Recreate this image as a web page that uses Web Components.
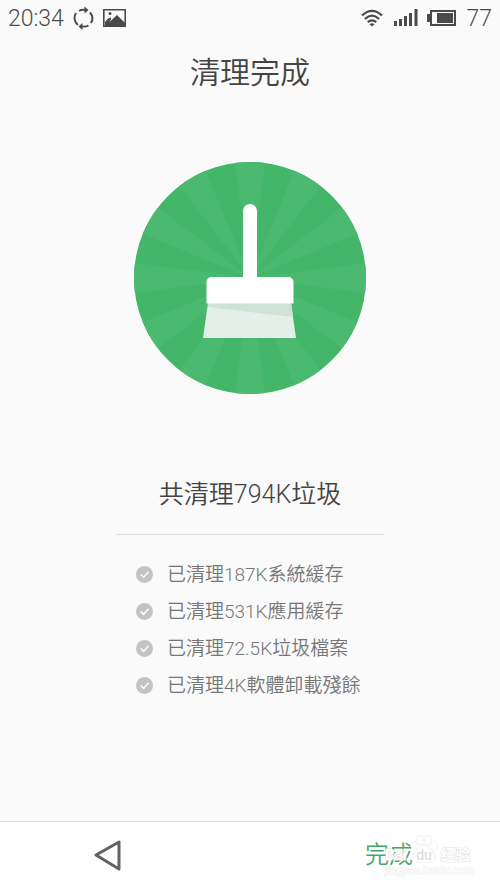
<!DOCTYPE html>
<html lang="zh-Hant">
<head>
<meta charset="utf-8">
<meta name="viewport" content="width=device-width, initial-scale=1">
<title>清理完成</title>
<style>
  html, body { margin: 0; height: 100%; }
  body {
    background: #fafafa;
    color: #444;
    font-family: Roboto, "Noto Sans CJK TC", sans-serif;
    font-weight: 350;
  }
</style>
</head>
<body>
<cleaner-screen>
  <status-bar slot="status" time="20:34" level="77"></status-bar>
  <span slot="title">清理完成</span>
  <broom-badge slot="art"></broom-badge>
  <span slot="summary">共清理794K垃圾</span>
  <check-item slot="items">已清理187K系統緩存</check-item>
  <check-item slot="items">已清理531K應用緩存</check-item>
  <check-item slot="items">已清理72.5K垃圾檔案</check-item>
  <check-item slot="items">已清理4K軟體卸載殘餘</check-item>
  <bottom-bar slot="footer">完成</bottom-bar>
</cleaner-screen>

<script>
class BaseElement extends HTMLElement {
  connectedCallback() {
    if (this.shadowRoot) return;
    this.attachShadow({ mode: "open" }).innerHTML = this.template();
  }
}

customElements.define("cleaner-screen", class extends BaseElement {
  template() {
    return `
    <style>
      :host { display: flex; flex-direction: column; min-height: 100vh; }
      main { flex: 1; display: flex; flex-direction: column; align-items: center; }
      h1 { margin: 15px 0 0; font-size: 30px; line-height: 44px; font-weight: inherit; }
      .art { margin-top: 67px; }
      h2 { margin: 83px 0 0; font-size: 25px; line-height: 36px; font-weight: inherit; }
      .list {
        margin-top: 21px; padding: 21px 20px 40px; box-sizing: border-box;
        width: 268px; border-top: 1px solid #dedede;
      }
    </style>
    <slot name="status"></slot>
    <main>
      <h1><slot name="title"></slot></h1>
      <div class="art"><slot name="art"></slot></div>
      <h2><slot name="summary"></slot></h2>
      <div class="list" role="list"><slot name="items"></slot></div>
    </main>
    <slot name="footer"></slot>`;
  }
});

customElements.define("status-bar", class extends BaseElement {
  template() {
    return `
    <style>
      :host { display: flex; justify-content: space-between; align-items: center;
              height: 36px; padding: 0 8px; font-size: 23px; font-weight: 300; color: #4a4a4a; }
      div { display: flex; align-items: center; gap: 9px; }
      svg { display: block; }
    </style>
    <div>
      <span>${this.getAttribute("time")}</span>
      <svg width="21" height="24" viewBox="0 0 21 24" fill="none" stroke="currentColor" stroke-width="2">
        <path d="M5 19A9 9 0 0 1 3 7M6 5A9 9 0 0 1 12 4M17 6.500A9 9 0 0 1 18 17M15.500 19.500Q13 21 9 20.500"/>
        <path d="M11.500 .5l4 3.500-4 3.500zM9.500 17l-4 3.500 4 3.500z" fill="currentColor" stroke="none"/>
      </svg>
      <svg width="23" height="18" viewBox="0 0 23 18">
        <path fill="none" stroke="currentColor" stroke-width="1.600" d="M.8.8h21.400v16.400H.8z"/>
        <circle cx="7" cy="4.500" r="1.500" fill="currentColor"/>
        <path fill="currentColor" d="M2 13l3-3.500 3-1v2l-2 3 8-7.500 8 8V17H2z"/>
      </svg>
    </div>
    <div>
      <svg width="22" height="18" viewBox="0 0 23 18" fill="none" stroke="currentColor" stroke-width="2.200">
        <path d="M1 6.500Q11.500-3.500 22 6.500M4 10Q11.500 3 19 10M7 13.300Q11.500 9.500 16 13.300"/>
        <path d="M8.800 15.500Q11.500 13.500 14.200 15.500L11.500 18z" fill="currentColor" stroke="none"/>
      </svg>
      <svg width="26" height="18" viewBox="0 0 26 18" fill="currentColor">
        <path d="M2 12h3v5H2zM7 10h3v7H7zM12 7h3v10h-3zM17 4h3v13h-3zM22.500 0h3v17h-3z"/>
      </svg>
      <svg width="30" height="16" viewBox="0 0 30 16">
        <path fill="none" stroke="currentColor" stroke-width="2" d="M4 1h24v14H4z"/>
        <path fill="currentColor" d="M0 4h4v8H0zM10 3h16v10H10z"/>
      </svg>
      <span>${this.getAttribute("level")}</span>
    </div>`;
  }
});

customElements.define("broom-badge", class extends BaseElement {
  template() {
    return `
    <style>:host, svg { display: block; }</style>
    <svg width="232" height="232" viewBox="0 0 232 232" role="img" aria-label="清理">
      <circle cx="116" cy="116" r="116" fill="#44b66a"/>
      <circle cx="116" cy="116" r="58" fill="none" stroke="#4cb971" stroke-width="116"
        pathLength="24" stroke-dasharray="1 1" stroke-dashoffset=".5"/>
      <path fill="#e5efe9" d="M74 141h83l5 35H69z"/>
      <path fill="#d0e1d6" d="M74 141h83l2 14-85-10z"/>
      <path fill="#fff" d="M72.500 120a5 5 0 0 1 5-5H109V49a7 7 0 0 1 14 0v66h31.500a5 5 0 0 1 5 5v21.500h-87z"/>
    </svg>`;
  }
});

customElements.define("check-item", class extends BaseElement {
  connectedCallback() { super.connectedCallback(); this.setAttribute("role", "listitem"); }
  template() {
    return `
    <style>
      :host { display: flex; align-items: center; gap: 14px; height: 37px;
              font-size: 19px; line-height: 28px; color: #767676; white-space: nowrap; }
      svg { flex: none; }
    </style>
    <svg width="17" height="17" viewBox="0 0 17 17">
      <circle cx="8.500" cy="8.500" r="8.500" fill="#c3c3c3"/>
      <path d="M4.800 8.500l2.800 2.800 5-5.500" fill="none" stroke="#fafafa" stroke-width="1.600"/>
    </svg>
    <span><slot></slot></span>`;
  }
});

customElements.define("bottom-bar", class extends BaseElement {
  template() {
    return `
    <style>
      :host { display: grid; grid-template-columns: 216px 1fr 222px; align-items: center;
              height: 66px; background: #fff; border-top: 1px solid #dedede; }
      button { border: 0; background: none; padding: 0; margin: 0; font: inherit; color: inherit; justify-self: center; }
      .done { grid-column: 3; font-size: 24px; line-height: 36px; color: #42a868; position: relative; }
      svg { display: block; }
      .mark { position: absolute; left: 20px; top: -2px; font: 700 15px/18px Roboto, "Noto Sans CJK SC", sans-serif;
              color: #fff; -webkit-text-stroke: 1px #e2e2e2; paint-order: stroke; pointer-events: none; white-space: nowrap; }
      .row { display: flex; align-items: flex-end; gap: 3px; height: 29px; }
      .url { display: block; font-size: 11px; line-height: 12px; font-weight: 400; margin-top: 1px; color: #fff; -webkit-text-stroke-color: #ececec; }
    </style>
    <button aria-label="返回">
      <svg width="28" height="32" viewBox="0 0 28 32"><path d="M2 16L25 3v27z" fill="none" stroke="#626262" stroke-width="3" stroke-linejoin="round"/></svg>
    </button>
    <button class="done"><slot></slot>
      <span class="mark">
        <span class="row"><span>Bai</span>
          <svg width="28" height="29" viewBox="0 0 28 29" fill="#fff" stroke="#e2e2e2">
            <ellipse cx="4" cy="11" rx="3" ry="4"/><ellipse cx="10" cy="5" rx="3" ry="4.500"/>
            <ellipse cx="18" cy="5" rx="3" ry="4.500"/><ellipse cx="24" cy="11" rx="3" ry="4"/>
            <path d="M14 10c-4 0-5 4-9 7-4 4-1 10 3 10h12c5 0 7-6 3-10-4-3-5-7-9-7z"/>
            <text x="14" y="25" text-anchor="middle" font-size="14" font-weight="400" fill="#d8d8d8" stroke="none" style="-webkit-text-stroke:0">du</text>
          </svg>
          <span>经验</span></span>
        <span class="url">jingyan.baidu.com</span>
      </span>
    </button>`;
  }
});
</script>
</body>
</html>
